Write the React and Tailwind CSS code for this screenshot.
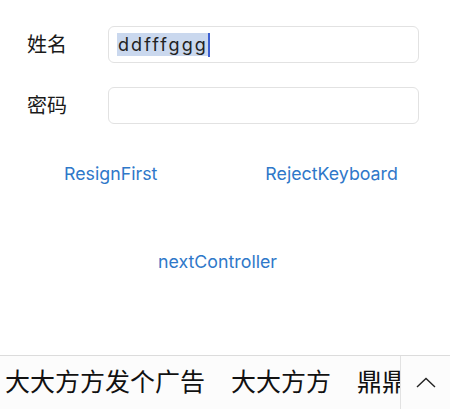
import { useState } from 'react';

const font = { fontFamily: 'Inter, "Noto Sans CJK SC", sans-serif' };

function Field({ label, value, selected }) {
  return (
    <div className="flex items-center">
      <span className="w-[108px] shrink-0 pl-[27px] text-[20px] leading-none text-[#1a1a1a]">{label}</span>
      <div className="flex h-[37px] w-[311px] items-center rounded-[6px] border border-[#e2e2e2] bg-white pl-[8px]">
        {value ? (
          <span className="flex h-[23px] items-center">
            <span
              className={`pl-[1px] text-[18px] leading-[23px] tracking-[2.1px] text-[#222] ${selected ? 'bg-[#cad8ee]' : ''}`}
            >
              {value}
            </span>
            <span className="h-[24px] w-[2px] bg-[#3d5fd1]" />
          </span>
        ) : null}
      </div>
    </div>
  );
}

export default function App() {
  const [name] = useState('ddfffggg');
  const ads = ['大大方方发个广告', '大大方方', '鼎鼎'];

  return (
    <div className="flex h-[409px] w-[450px] flex-col overflow-hidden bg-white" style={font}>
      <div className="flex flex-col gap-[24px] pt-[26px]">
        <Field label="姓名" value={name} selected />
        <Field label="密码" value="" />
      </div>

      <div className="mt-[38px] flex text-[17.8px] leading-[24px] text-[#2f78c9]">
        <button className="ml-[64px]">ResignFirst</button>
        <button className="ml-[108px]">RejectKeyboard</button>
      </div>

      <div className="mt-[64px] pl-[158px] text-[17.8px] leading-[24px] text-[#2f78c9]">
        <button>nextController</button>
      </div>

      <div className="mt-auto flex h-[54px] border-t border-[#dcdcdc] bg-[#fcfcfc]">
        <div className="flex flex-1 items-center gap-[26px] overflow-hidden whitespace-nowrap pl-[5px] text-[25px] leading-none text-[#111]">
          {ads.map((t) => (
            <span key={t}>{t}</span>
          ))}
        </div>
        <button className="flex w-[50px] items-center justify-center border-l border-[#e2e2e2]">
          <svg width="20" height="11" viewBox="0 0 20 11" fill="none" stroke="#222" strokeWidth="1.4">
            <path d="M1 10 L10 1.5 L19 10" />
          </svg>
        </button>
      </div>
    </div>
  );
}
